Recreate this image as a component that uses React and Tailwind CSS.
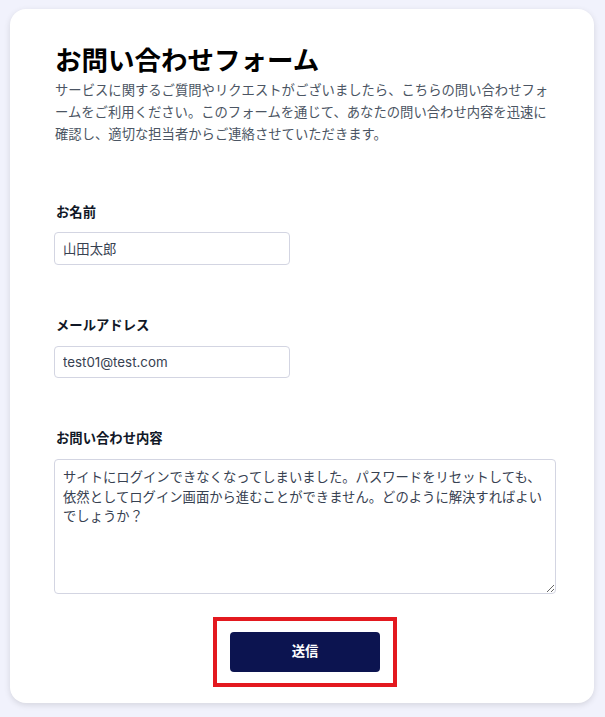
import React from "react";

const font = { fontFamily: "Inter, 'Noto Sans CJK JP', sans-serif" };

export default function App() {
  return (
    <div
      className="min-h-[717px] w-full bg-[#f1f2fc] pl-[10px] pr-[11px] pt-[9px] pb-[14px]"
      style={font}
    >
      <div className="rounded-[16px] bg-white pl-[44px] pr-[38px] pt-[34px] pb-[16px] shadow-[0_2px_6px_rgba(0,0,0,0.12)]">
        <h1 className="pl-[1px] text-[26.5px] font-bold leading-[34px] text-black">
          お問い合わせフォーム
        </h1>
        <p className="mt-[2px] pl-[1px] pr-[2px] text-[13.33px] leading-[22px] text-[#4b5563]">
          サービスに関するご質問やリクエストがございましたら、こちらの問い合わせフォームをご利用ください。このフォームを通じて、あなたの問い合わせ内容を迅速に確認し、適切な担当者からご連絡させていただきます。
        </p>

        <form className="mt-[57px]" onSubmit={(e) => e.preventDefault()}>
          <label className="block pl-[2px] text-[13.33px] font-semibold leading-[20px] text-[#111827]">
            お名前
          </label>
          <input
            type="text"
            defaultValue="山田太郎"
            className="mt-[10px] block h-[33px] w-[236px] rounded-[4px] border border-[#d3d5e2] px-[8px] text-[13.33px] text-[#374151] outline-none"
          />

          <label className="mt-[50px] block pl-[2px] text-[13.33px] font-semibold leading-[20px] text-[#111827]">
            メールアドレス
          </label>
          <input
            type="email"
            defaultValue="test01@test.com"
            className="mt-[11px] block h-[32px] w-[236px] rounded-[4px] border border-[#d3d5e2] px-[8px] text-[13.33px] text-[#374151] outline-none"
          />

          <label className="mt-[50px] block pl-[2px] text-[13.33px] font-semibold leading-[20px] text-[#111827]">
            お問い合わせ内容
          </label>
          <textarea
            defaultValue="サイトにログインできなくなってしまいました。パスワードをリセットしても、依然としてログイン画面から進むことができません。どのように解決すればよいでしょうか？"
            className="mt-[11px] block h-[135px] w-full rounded-[4px] border border-[#d3d5e2] px-[8px] py-[8px] text-[13.33px] leading-[19.5px] text-[#374151] outline-none"
          />

          <div className="mt-[23px] flex justify-center">
            <div className="flex h-[70px] w-[184px] items-center justify-center border-[4px] border-[#e3191f]">
              <button
                type="submit"
                className="h-[40px] w-[150px] rounded-[4px] bg-[#0c1450] text-[13.33px] font-bold text-white"
              >
                送信
              </button>
            </div>
          </div>
        </form>
      </div>
    </div>
  );
}
